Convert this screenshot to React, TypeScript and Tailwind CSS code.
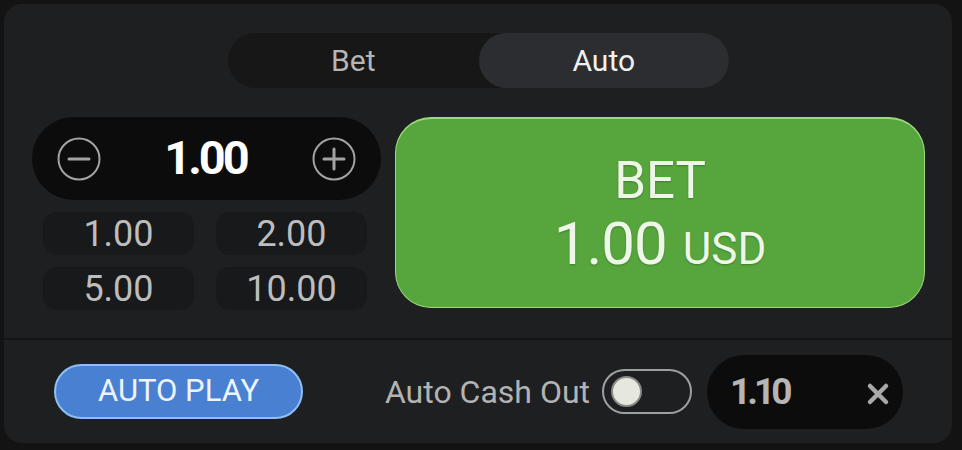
import { useState } from "react";

const font = { fontFamily: "Roboto, 'Liberation Sans', sans-serif" };

function CircleIcon({ plus }: { plus?: boolean }) {
	return (
		<svg width="44" height="44" viewBox="0 0 44 44" fill="none">
			<circle cx="22" cy="22" r="20.5" stroke="#a3a3a3" strokeWidth="2" />
			<line x1="12" y1="22" x2="32" y2="22" stroke="#a3a3a3" strokeWidth="3" strokeLinecap="round" />
			{plus && (
				<line x1="22" y1="12" x2="22" y2="32" stroke="#a3a3a3" strokeWidth="3" strokeLinecap="round" />
			)}
		</svg>
	);
}

function ClearIcon() {
	return (
		<svg width="24" height="24" viewBox="0 0 24 24" fill="none">
			<path d="M4 4 L20 20 M20 4 L4 20" stroke="#a8a8a8" strokeWidth="4.5" strokeLinecap="round" />
		</svg>
	);
}

const chips = ["1.00", "2.00", "5.00", "10.00"];

export default function App() {
	const [tab, setTab] = useState<"bet" | "auto">("auto");
	const [cashOut, setCashOut] = useState(false);

	return (
		<div
			className="w-[962px] h-[450px] bg-[#131313] pt-[4px] pl-[4px] pr-[10px] pb-[7px]"
			style={font}
		>
			<div className="h-full w-full rounded-[18px] bg-[#1e1f20] flex flex-col overflow-hidden">
				{/* top part */}
				<div className="flex flex-col pt-[29px] px-[27px] pl-[28px] h-[334px]">
					<div className="self-center flex w-[501px] h-[55px] rounded-full bg-[#171718] text-[30px]">
						<button
							onClick={() => setTab("bet")}
							className={
								tab === "bet"
									? "flex-1 rounded-full bg-[#2c2d30] text-[#f0f0f0]"
									: "flex-1 rounded-full text-[#b5b5b5]"
							}
						>
							Bet
						</button>
						<button
							onClick={() => setTab("auto")}
							className={
								tab === "auto"
									? "flex-1 rounded-full bg-[#2c2d30] text-[#f0f0f0]"
									: "flex-1 rounded-full text-[#b5b5b5]"
							}
						>
							Auto
						</button>
					</div>

					<div className="flex gap-[14px] mt-[29px]">
						<div className="w-[349px] flex flex-col">
							<div className="h-[83px] rounded-full bg-[#0c0c0c] flex items-center justify-between px-[25px]">
								<CircleIcon />
								<span className="text-[47px] font-bold text-white tracking-[-3px] pr-[2px]">
									1.00
								</span>
								<CircleIcon plus />
							</div>
							<div className="grid grid-cols-2 gap-x-[22px] gap-y-[12px] pl-[11px] pr-[14px] mt-[12px]">
								{chips.map((c) => (
									<div
										key={c}
										className="h-[43px] rounded-[14px] bg-[#18191a] flex items-center justify-center text-[36px] text-[#bdbdbd]"
									>
										{c}
									</div>
								))}
							</div>
						</div>

						<button className="w-[530px] h-[191px] rounded-[36px] bg-[#56a63d] border-t-2 border-x border-b border-[#9bd97f] flex flex-col items-center justify-center pt-[10px] text-[#eef6e8] [text-shadow:0_1px_2px_rgba(0,0,0,0.25)]">
							<span className="text-[51px] leading-[56px]">BET</span>
							<span className="leading-[70px] flex items-baseline">
								<span className="text-[60px] tracking-[-1px]">1.00</span>
								<span className="text-[44px] ml-[16px]">USD</span>
							</span>
						</button>
					</div>
				</div>

				<div className="border-t-2 border-[#141414]" />

				{/* bottom part */}
				<div className="flex-1 flex items-center justify-between pl-[50px] pr-[49px]">
					<button className="w-[249px] h-[55px] rounded-full bg-[#4a80d2] border-2 border-[#8dbff3] text-[31px] text-[#eef4ff]">
						AUTO PLAY
					</button>
					<div className="flex items-center">
						<span className="text-[32px] text-[#b3b3b3]">Auto Cash Out</span>
						<button
							onClick={() => setCashOut(!cashOut)}
							className="ml-[12px] w-[90px] h-[45px] rounded-full border-2 border-[#9f9f9f] flex items-center px-[7px]"
						>
							<span
								className={
									cashOut
										? "ml-auto w-[31px] h-[31px] rounded-full bg-[#e6e8dd] border-2 border-[#8a8a8a]"
										: "w-[31px] h-[31px] rounded-full bg-[#e6e8dd] border-2 border-[#8a8a8a]"
								}
							/>
						</button>
						<div className="ml-[15px] w-[196px] h-[74px] rounded-full bg-[#0c0c0c] flex items-center justify-between pl-[23px] pr-[13px]">
							<span className="text-[37px] font-bold text-[#b5b5b5] tracking-[-4px]">1.10</span>
							<span className="pt-[4px]">
								<ClearIcon />
							</span>
						</div>
					</div>
				</div>
			</div>
		</div>
	);
}
